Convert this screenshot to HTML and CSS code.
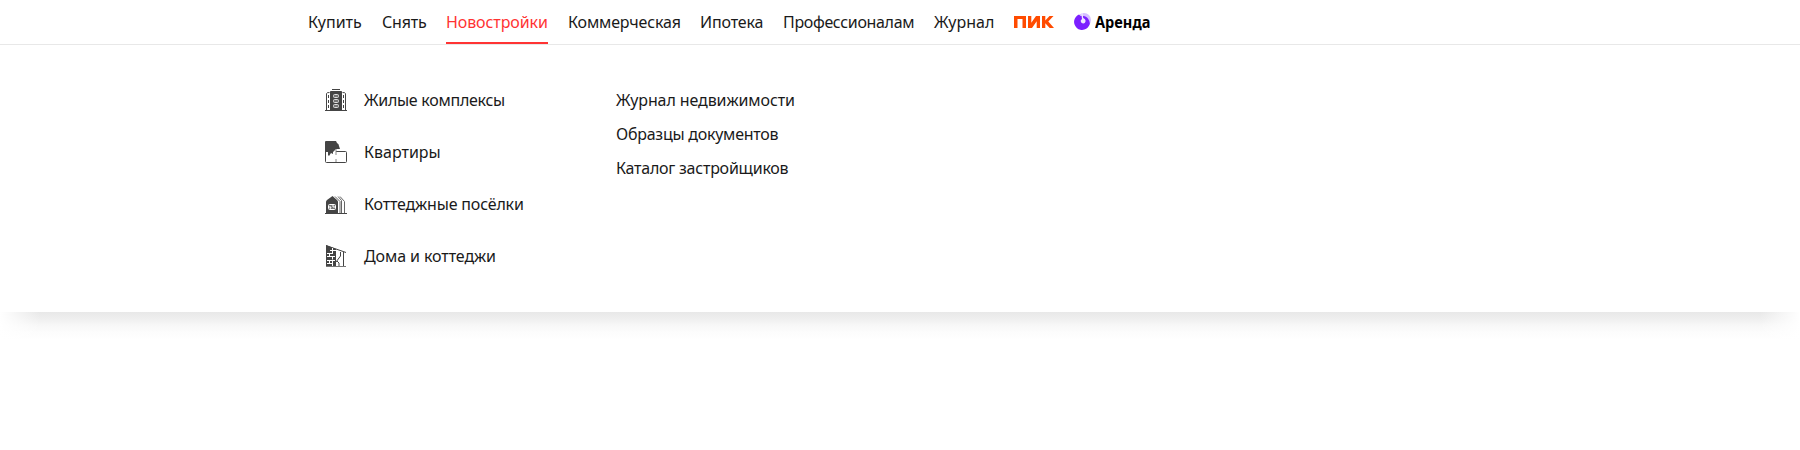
FILE: index.html
```
<!DOCTYPE html>
<html lang="ru">
<head>
<meta charset="utf-8">
<title>Новостройки</title>
<link rel="stylesheet" href="styles.css">
</head>
<body>
<header class="header">
  <nav class="nav">
    <a class="nav-link buy">Купить</a>
    <a class="nav-link rent">Снять</a>
    <a class="nav-link new active">Новостройки</a>
    <a class="nav-link commercial">Коммерческая</a>
    <a class="nav-link mortgage">Ипотека</a>
    <a class="nav-link pro">Профессионалам</a>
    <a class="nav-link journal">Журнал</a>
    <a class="nav-link pik" aria-label="ПИК">
      <svg width="40" height="12" viewBox="0 0 40 12" fill="#ff4b00"><path d="M0 0H12V12H8.500V3H3.500V12H0ZM14 0H17.300V6.700L22 0H26V12H22.700V5.300L18 12H14ZM28 0H31.300V4.500L35.500 0H39.500L34.300 5.500L40 12H35.700L31.300 7.200V12H28Z"/></svg>
    </a>
    <a class="nav-link arenda">
      <svg width="17" height="17" viewBox="0 0 17 17"><circle cx="10" cy="7" r="7" fill="#d5bfff"/><path d="M5 1.500A8 8 0 1 0 15.800 11C16 7 13 3.500 9.500 3L6.500 3Z" fill="#7b1fff"/><path d="M7.200 0H8.600L9.200 5C11.800 6 12.300 8.500 10.700 10C9.200 11.200 6.500 10 6.700 7.500L8 6Z" fill="#eee5ff"/></svg>
      <span>Аренда</span>
    </a>
  </nav>
</header>
<main class="menu">
  <ul class="types">
    <li><svg class="icon" viewBox="0 0 24 24"><path fill="#444" d="M8 1H16V2H8ZM6 3.500Q6 3 7 3H17Q18 3 18 3.500V23H6Z"/><path stroke="#444" fill="none" d="M1 22.500H23M2.500 22V5.500Q2.500 4.500 5.500 4.500M21.500 22V5.500Q21.500 4.500 18.500 4.500"/><path stroke="#444" stroke-dasharray="3 2" d="M4.500 7V22M19.500 7V22"/><g fill="#777" stroke="#ddd"><rect x="9.500" y="6.500" width="5" height="3" rx="1"/><rect x="9.500" y="11.500" width="5" height="3" rx="1"/><rect x="9.500" y="16.500" width="5" height="3" rx="1"/></g></svg><span class="l1">Жилые комплексы</span></li>
    <li><svg class="icon" viewBox="0 0 24 24"><path fill="#444" d="M1 2Q1 1 2 1H12L13 3Q15 4 15 6L16 9H12L9 12V14L7 13L5 16L4 15V12H1Z"/><path stroke="#444" fill="none" d="M1.500 11V21.500Q1.500 22.500 2.500 22.500H21.500Q22.500 22.500 22.500 21.500V12.500Q22.500 11.500 21.500 11.500H12"/><path stroke="#888" d="M12 9V15M12 19V22"/></svg><span class="l2">Квартиры</span></li>
    <li><svg class="icon" viewBox="0 0 24 24"><path fill="#444" d="M2 10Q2 9 3 8L8.500 4L13 8Q14 9 14 10V22H2Z"/><path stroke="#444" fill="none" d="M1 21.500H23"/><path stroke="#666" fill="none" d="M11 4.500L16 9.500V21M14 4.500L17.500 8.500V21M16 4.500L20.500 9.500V21"/><rect x="4.500" y="12.500" width="7" height="5" rx="1" fill="#777" stroke="#fff"/><path d="M5 15H7L6 17M9 13V15H11" stroke="#fff" fill="none"/></svg><span class="l3">Коттеджные посёлки</span></li>
    <li><svg class="icon" viewBox="0 0 24 24"><path fill="#444" d="M2 1L12 5V22H2Z"/><path stroke="#444" fill="none" d="M2 1.500L22 8.500"/><path stroke="#fff" fill="none" d="M6 6.500H12M8.500 4V10M3 9.500H8M5.500 9.500V12M3 12.500H11M8.500 12V15.500M3 16.500H11M5.500 16V20M3 19.500H8M8.500 17V22"/><path stroke="#777" fill="none" d="M2 22.500H22"/><path stroke="#444" fill="none" d="M19.500 8V22M16.500 8V12L12 18M13 17L15 19V22"/></svg><span class="l4">Дома и коттеджи</span></li>
  </ul>
  <ul class="links">
    <li><span class="r1">Журнал недвижимости</span></li>
    <li><span class="r2">Образцы документов</span></li>
    <li><span class="r3">Каталог застройщиков</span></li>
  </ul>
</main>
<div class="shade"></div>
</body>
</html>
```
FILE: styles.css
```
body { margin: 0; background: #fff; color: #1a1a1a; font: 16px/20px "Noto Sans", sans-serif; }
ul { list-style: none; margin: 0; padding: 0; }
svg { display: block; flex: none; }
.header { border-bottom: 1px solid #e8e8e8; }
.nav { display: flex; gap: 20px; height: 44px; padding-left: 308px; }
.nav-link { box-sizing: border-box; height: 44px; padding-top: 12px; white-space: nowrap; }
.active { color: #ff3333; border-bottom: 2px solid #ff3333; }
.buy { width: 54px; }
.rent { width: 44px; letter-spacing: -.2px; }
.new { width: 102px; letter-spacing: -.1px; }
.commercial { width: 112px; letter-spacing: -.15px; }
.mortgage { width: 63px; letter-spacing: -.15px; }
.pro { width: 131px; letter-spacing: -.34px; }
.journal { width: 60px; }
.pik { width: 40px; padding-top: 16px; }
.arenda { display: flex; gap: 4px; padding-top: 13px; color: #000; }
.arenda span { font: 700 16px/20px "Noto Sans", sans-serif; margin-top: -1px; transform: scaleX(.91); transform-origin: left; }
.menu { display: flex; box-sizing: border-box; height: 267px; padding: 43px 0 0 324px; }
.types { width: 292px; }
.types li { display: flex; align-items: center; gap: 16px; height: 24px; margin-bottom: 28px; }
.icon { width: 24px; height: 24px; }
.links li { height: 24px; line-height: 24px; margin-bottom: 10px; }
.l1 { letter-spacing: -.27px; }
.l3 { letter-spacing: -.17px; }
.l4 { letter-spacing: -.09px; }
.r1 { letter-spacing: -.1px; }
.r2 { letter-spacing: -.25px; }
.r3 { letter-spacing: -.24px; }
/* Soft shade under the menu, fading out towards both window edges */
.shade {
  height: 28px;
  background:
    linear-gradient(to right, #fff, rgba(255, 255, 255, .5) 20px, rgba(255, 255, 255, 0) 40px, rgba(255, 255, 255, 0) calc(100% - 40px), rgba(255, 255, 255, .5) calc(100% - 20px), #fff),
    linear-gradient(#e8e8e8, #efefef 7px, #f7f7f7 13px, #fcfcfc 20px, #fff);
}
```
